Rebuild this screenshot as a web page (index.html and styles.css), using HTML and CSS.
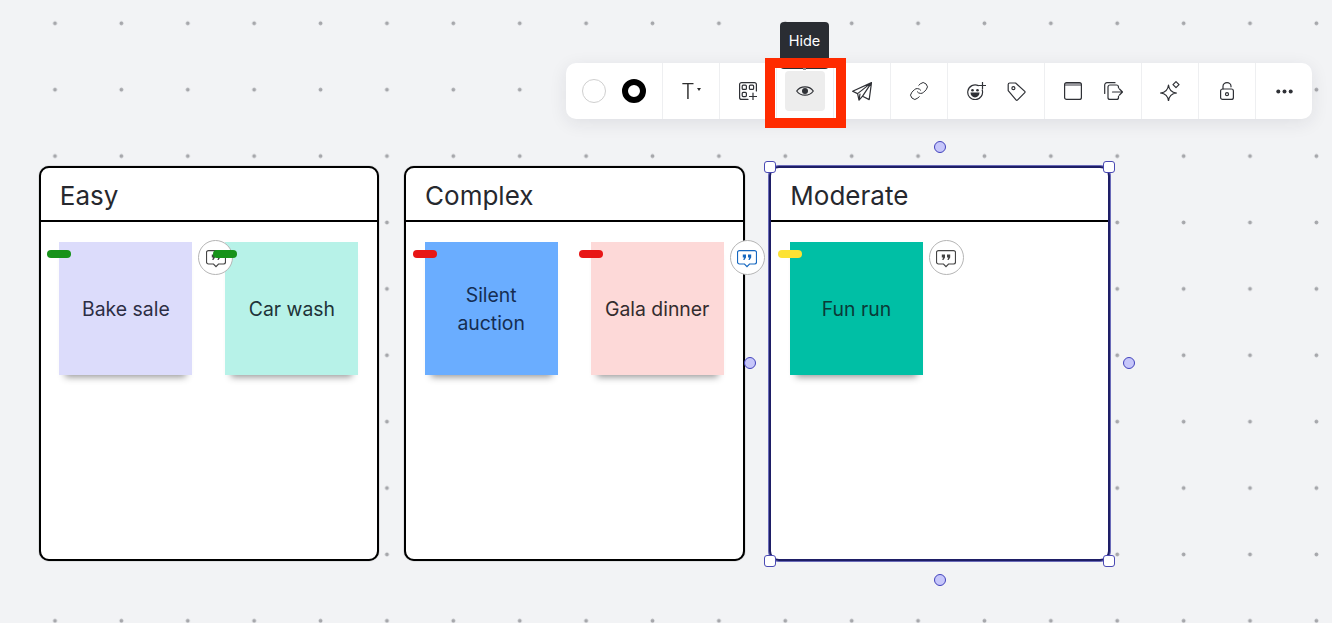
FILE: index.html
```html
<!DOCTYPE html>
<html lang="en">
  <head>
    <meta charset="UTF-8" />
    <meta name="viewport" content="width=device-width, initial-scale=1.0" />
    <title>Board</title>
    <link rel="stylesheet" href="styles.css">
  </head>
  <body>
    <svg class="defs" width="0" height="0">
      <symbol id="bubble" viewBox="0 0 20 18">
        <path d="M2.5.6h15a2 2 0 0 1 2 2V12a2 2 0 0 1-2 2h-5L10 16.6 7.5 14h-5a2 2 0 0 1-2-2V2.6a2 2 0 0 1 2-2Z" fill="none" stroke="currentColor" stroke-width="1.2" />
        <path d="M5.8 4.4h3.2v3L7.4 10H6.2l.9-2.4H5.8ZM11 4.4h3.2v3L12.6 10h-1.2l.9-2.4H11Z" fill="currentColor" />
      </symbol>
    </svg>

    <div class="board">
      <div class="frame">
        <h2>Easy</h2>
        <div class="frame-body">
          <div class="note lavender">
            <span class="tag green"></span>
            <span class="comment"><svg><use href="#bubble" /></svg></span>
            Bake sale
          </div>
          <div class="note mint">
            <span class="tag green"></span>
            Car wash
          </div>
        </div>
      </div>

      <div class="frame">
        <h2>Complex</h2>
        <div class="frame-body">
          <div class="note blue">
            <span class="tag red"></span>
            Silent<br />auction
          </div>
          <div class="note pink">
            <span class="tag red"></span>
            <span class="comment active"><svg><use href="#bubble" /></svg></span>
            Gala dinner
          </div>
        </div>
      </div>

      <div class="frame selected">
        <h2>Moderate</h2>
        <div class="frame-body">
          <div class="note teal">
            <span class="tag yellow"></span>
            <span class="comment"><svg><use href="#bubble" /></svg></span>
            Fun run
          </div>
        </div>
        <span class="handle top-left"></span>
        <span class="handle top-right"></span>
        <span class="handle bottom-left"></span>
        <span class="handle bottom-right"></span>
        <span class="anchor top"></span>
        <span class="anchor bottom"></span>
        <span class="anchor left"></span>
        <span class="anchor right"></span>
      </div>
    </div>

    <div class="toolbar">
      <div class="tooltip">Hide</div>

      <div class="group">
        <button><span class="swatch"></span></button>
        <button><span class="swatch ring"></span></button>
      </div>
      <div class="group">
        <button class="text-btn">T<span class="caret"></span></button>
      </div>
      <div class="group">
        <button>
          <svg width="18" height="18" viewBox="0 0 18 18">
            <path d="M17.4 9V2.6a2 2 0 0 0-2-2H2.6a2 2 0 0 0-2 2v12.8a2 2 0 0 0 2 2H9" />
            <rect x="3.2" y="3.2" width="4.2" height="4.2" rx="1" />
            <rect x="10.4" y="3.2" width="4.2" height="4.2" rx="1" />
            <rect x="3.2" y="10.4" width="4.2" height="4.2" rx="1" />
            <path d="M14 11v7M10.5 14.5h7" />
          </svg>
        </button>
      </div>
      <div class="group">
        <button class="hovered">
          <svg width="18" height="12" viewBox="0 0 18 12">
            <path d="M.7 6C4.5.4 13.5.4 17.3 6 13.5 11.6 4.5 11.6.7 6Z" />
            <circle class="solid" cx="9" cy="6" r="3" />
          </svg>
        </button>
      </div>
      <div class="group">
        <button>
          <svg width="20" height="19" viewBox="0 0 20 19">
            <path d="M19.5.6.6 9.2l5 2.4L7 18.2l3.6-4 6.6 3.4ZM19.5.6 5.6 11.6M19.5.6 10.6 14.2M7 18.2l1-6.2" />
          </svg>
        </button>
      </div>
      <div class="group">
        <button>
          <svg width="20" height="20" viewBox="0 0 24 24">
            <path d="M10 13a5 5 0 0 0 7.54.54l3-3a5 5 0 0 0-7.07-7.07l-1.72 1.71" />
            <path d="M14 11a5 5 0 0 0-7.54-.54l-3 3a5 5 0 0 0 7.07 7.07l1.71-1.71" />
          </svg>
        </button>
      </div>
      <div class="group">
        <button>
          <svg width="19" height="18" viewBox="0 0 19 18">
            <path d="M11.4 3.6A7.4 7.4 0 1 0 15.2 8" />
            <circle class="solid" cx="5.5" cy="8.2" r="1.3" />
            <circle class="solid" cx="10.5" cy="8.2" r="1.3" />
            <path class="solid" d="M3.5 10.5h9a4.5 5 0 0 1-9 0Z" />
            <path d="M15.5 0v7M12 3.5h7" />
          </svg>
        </button>
        <button>
          <svg width="19" height="19" viewBox="0 0 19 19">
            <path d="M1.2 2.6Q1.2 1 2.8 1h5.8l9.2 8.4q.6.6 0 1.2l-7.4 7.5q-.6.6-1.2 0L1.2 8.6Z" />
            <circle cx="6.4" cy="6.2" r="1.5" />
          </svg>
        </button>
      </div>
      <div class="group">
        <button>
          <svg width="18" height="18" viewBox="0 0 18 18">
            <path class="grey" d="M.6 4V2.6a2 2 0 0 1 2-2h12.8a2 2 0 0 1 2 2V4Z" />
            <rect x=".6" y=".6" width="16.8" height="16.8" rx="2" />
          </svg>
        </button>
        <button>
          <svg width="19" height="18" viewBox="0 0 19 18">
            <path d="M11 .7H3A2.3 2.3 0 0 0 .7 3v8.5" />
            <path d="M14.5 6v-1a2 2 0 0 0-2-2H6a2 2 0 0 0-2 2v10.4a2 2 0 0 0 2 2h6.5a2 2 0 0 0 2-2v-1.2" />
            <path d="M8.5 10h10M15.5 7l3 3-3 3" />
          </svg>
        </button>
      </div>
      <div class="group">
        <button>
          <svg width="20" height="20" viewBox="0 0 20 20">
            <path d="M8.5 4C9 9 11.5 11.5 16.5 12 11.5 12.5 9 15 8.5 20 8 15 5.5 12.5.5 12 5.5 11.5 8 9 8.5 4Z" />
            <path d="M16 .7 19 3.7 16 6.7 13 3.7Z" />
          </svg>
        </button>
      </div>
      <div class="group">
        <button>
          <svg width="14" height="18" viewBox="0 0 14 18">
            <rect x=".6" y="7" width="12.8" height="10.4" rx="2" />
            <path d="M3 7V4.2a4 3.6 0 0 1 8 0v.6" />
            <circle cx="7" cy="12.2" r="1.5" />
          </svg>
        </button>
      </div>
      <div class="group last">
        <button>
          <svg width="17" height="5" viewBox="0 0 17 5">
            <circle class="solid" cx="2.3" cy="2.5" r="2" />
            <circle class="solid" cx="8.5" cy="2.5" r="2" />
            <circle class="solid" cx="14.7" cy="2.5" r="2" />
          </svg>
        </button>
      </div>

      <div class="highlight"></div>
    </div>
  </body>
</html>
```

FILE: styles.css
```css
* {
  margin: 0;
  padding: 0;
  box-sizing: border-box;
}

body {
  position: relative;
  height: 623px;
  overflow: hidden;
  font-family: Inter, "Liberation Sans", sans-serif;
  color: #26282e;
  background-color: #f2f3f5;
  background-image: radial-gradient(circle, #a6a7ab 1.6px, transparent 2.3px);
  background-size: 66.4px 66.4px;
  background-position: 21.8px -9.9px;
}

.defs {
  position: absolute;
}

/* Frames */

.board {
  display: flex;
  gap: 24.7px;
  padding: 165.6px 0 0 38.8px;
}

.frame {
  position: relative;
  width: 340.6px;
  height: 395.4px;
  background-color: #fff;
  border: 2px solid #000;
  border-radius: 10px;
  box-shadow: 0 0 1px rgba(0, 0, 0, 0.7);
}

.frame > h2 {
  height: 54.6px;
  padding: 13px 0 0 19px;
  font-size: 26px;
  font-weight: 400;
  line-height: 30px;
  border-bottom: 2px solid #000;
}

.frame-body {
  display: flex;
  gap: 33px;
  padding: 20px 0 0 18.6px;
}

.selected {
  border-color: #1e1e66;
  box-shadow: 0 0 0 1px #6a6ab8;
}

/* Notes */

.note {
  position: relative;
  display: flex;
  align-items: center;
  justify-content: center;
  width: 133px;
  height: 133px;
  text-align: center;
  font-size: 19.4px;
  line-height: 28px;
  box-shadow: 0 8px 7px -6px rgba(0, 0, 0, 0.42);
}

.lavender {
  background-color: #dcdcfb;
  color: #2c2e44;
}
.mint {
  background-color: #b7f2e8;
  color: #1e3338;
}
.blue {
  background-color: #6aadff;
  color: #152d52;
}
.pink {
  background-color: #fdd9d8;
  color: #332c2e;
}
.teal {
  background-color: #00bfa5;
  color: #0a3a38;
}

.tag {
  position: absolute;
  top: 8px;
  left: -12px;
  width: 24px;
  height: 8px;
  border-radius: 4px;
  z-index: 2;
}
.tag.green {
  background-color: #17921a;
}
.tag.red {
  background-color: #e81616;
}
.tag.yellow {
  background-color: #fde234;
}

.comment {
  position: absolute;
  top: -2px;
  right: -41px;
  display: flex;
  align-items: center;
  justify-content: center;
  width: 35px;
  height: 35px;
  color: #444;
  background-color: #fff;
  border: 1px solid #b5b5b5;
  border-radius: 50%;
  z-index: 1;
}

.comment svg {
  width: 20px;
  height: 18px;
  margin-top: 2px;
}

.comment.active {
  color: #1668c0;
}

/* Selection */

.handle {
  position: absolute;
  width: 12px;
  height: 12px;
  background-color: #fff;
  border: 1px solid #4a4ab4;
  border-radius: 3px;
}
.top-left {
  top: -7px;
  left: -7px;
}
.top-right {
  top: -7px;
  right: -7px;
}
.bottom-left {
  bottom: -8px;
  left: -7px;
}
.bottom-right {
  bottom: -8px;
  right: -7px;
}

.anchor {
  position: absolute;
  width: 12px;
  height: 12px;
  background-color: #c6c6fa;
  border: 1px solid #4242bc;
  border-radius: 50%;
}
.anchor.top {
  top: -27px;
  left: calc(50% - 6px);
}
.anchor.bottom {
  bottom: -27px;
  left: calc(50% - 6px);
}
.anchor.left {
  left: -27px;
  top: calc(50% - 6px);
}
.anchor.right {
  right: -27px;
  top: calc(50% - 6px);
}

/* Toolbar */

.toolbar {
  position: absolute;
  top: 63px;
  left: 566px;
  display: flex;
  height: 56px;
  background-color: #fff;
  border-radius: 10px;
  box-shadow: 0 4px 18px rgba(30, 35, 50, 0.09);
}

.group {
  display: flex;
  align-items: center;
  padding: 0 8px;
  border-right: 1px solid #eeeff1;
}

.group.last {
  border-right: none;
}

.group > button {
  display: flex;
  align-items: center;
  justify-content: center;
  width: 40px;
  height: 40px;
  background-color: transparent;
  border: none;
  border-radius: 4px;
  color: #2b2d33;
  font-family: inherit;
}

.group svg {
  fill: none;
  stroke: #2f3136;
  stroke-width: 1.2;
  stroke-linecap: round;
  stroke-linejoin: round;
}

.group svg .solid {
  fill: #2f3136;
  stroke: none;
}

.group svg .grey {
  fill: #9a9a9f;
  stroke: none;
}

.group > button.hovered {
  background-color: #ededed;
}

.swatch {
  width: 24px;
  height: 24px;
  background-color: #fff;
  border: 1px solid #cfcfcf;
  border-radius: 50%;
}

.swatch.ring {
  border: 6px solid #000;
}

.group > .text-btn {
  font-size: 21px;
  font-weight: 300;
  filter: grayscale(1);
}

.caret {
  width: 0;
  height: 0;
  margin: 0 0 3px 2px;
  border-left: 2.5px solid transparent;
  border-right: 2.5px solid transparent;
  border-top: 3px solid #2b2d33;
}

.tooltip {
  position: absolute;
  top: -41px;
  left: 214px;
  width: 49px;
  height: 47px;
  padding-top: 10px;
  text-align: center;
  font-size: 14.5px;
  line-height: 18px;
  color: #fff;
  background-color: #2a2d33;
  border-radius: 4px;
}

.tooltip::after {
  content: "";
  position: absolute;
  left: 23px;
  bottom: -1px;
  width: 3px;
  height: 3px;
  background-color: #8a8c90;
}

.highlight {
  position: absolute;
  top: -5px;
  left: 199px;
  width: 81px;
  height: 70px;
  border: 10px solid #ff2b00;
}
```
